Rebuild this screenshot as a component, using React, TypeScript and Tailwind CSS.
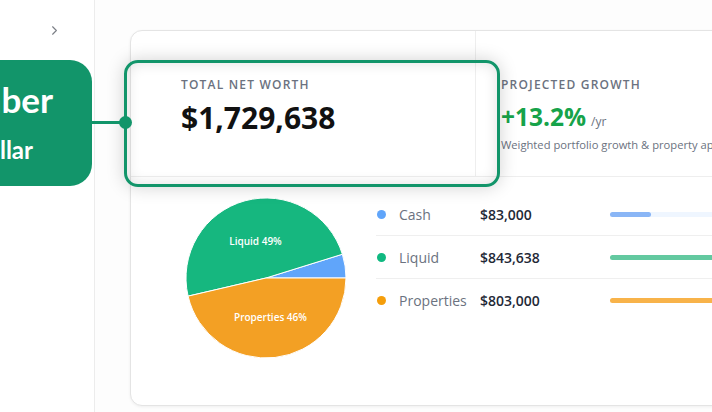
import React from "react";
import { ChevronRight } from "lucide-react";

const rows = [
  { label: "Cash", value: 83000, dot: "bg-[#60a5fa]", fill: "bg-[#8ab6f6]", track: "bg-[#eff6ff]" },
  { label: "Liquid", value: 843638, dot: "bg-[#10b981]", fill: "bg-[#63c9a0]", track: "bg-[#ecfdf5]" },
  { label: "Properties", value: 803000, dot: "bg-[#f59e0b]", fill: "bg-[#f8b34a]", track: "bg-[#fffbeb]" },
];

const max = Math.max(...rows.map((r) => r.value));
const fmt = (n: number) => "$" + n.toLocaleString("en-US");

function Pie() {
  return (
    <svg width="170" height="170" viewBox="0 0 170 170" className="shrink-0">
      <path d="M85,85 L165,85 A80,80 0 0 0 161.39,61.24 Z" fill="#60a5fa" stroke="#fff" strokeWidth="1" />
      <path d="M85,85 L161.39,61.24 A80,80 0 0 0 7.08,103.13 Z" fill="#16b77f" stroke="#fff" strokeWidth="1" />
      <path d="M85,85 L7.08,103.13 A80,80 0 0 0 165,85 Z" fill="#f3a024" stroke="#fff" strokeWidth="1" />
      <text x="74.5" y="51.5" textAnchor="middle" fill="#fff" fontSize="10" fontWeight="600" fontFamily="'Open Sans', sans-serif">
        Liquid 49%
      </text>
      <text x="89.5" y="127.5" textAnchor="middle" fill="#fff" fontSize="10" fontWeight="600" fontFamily="'Open Sans', sans-serif">
        Properties 46%
      </text>
    </svg>
  );
}

export default function App() {
  return (
    <div className="relative w-[712px] h-[412px] overflow-hidden bg-white flex font-['Open_Sans',sans-serif]">
      <aside className="w-[95px] h-full shrink-0 border-r border-[#ececec] flex justify-end pr-[32px] pt-[23px]">
        <ChevronRight size={15} strokeWidth={1.8} className="text-[#7b7f86]" />
      </aside>
      <main className="flex-1 min-w-0 pl-[35px] pt-[30px] bg-[#fdfdfd]">
        <div className="w-[640px] h-[376px] rounded-xl border border-[#e4e4e4] bg-white shadow-[0_1px_3px_rgba(0,0,0,0.06)]">
          <div className="flex h-[146px] border-b border-[#eeeeee]">
            <div className="w-[344px] shrink-0 pl-[50px] pt-[46px]">
              <div className="text-[12px] leading-[16px] tracking-[0.1em] font-semibold text-[#6b7280]">TOTAL NET WORTH</div>
              <div className="mt-[6px] text-[30px] leading-[38px] font-bold text-[#111111]">$1,729,638</div>
            </div>
            <div className="flex-1 min-w-0 overflow-hidden border-l border-[#eeeeee] pl-[25px] pt-[46px]">
              <div className="text-[12px] leading-[16px] tracking-[0.1em] font-semibold text-[#6b7280]">PROJECTED GROWTH</div>
              <div className="mt-[8px] flex items-baseline gap-[5px]">
                <span className="text-[24.5px] leading-[32px] font-bold text-[#16a34a]">+13.2%</span>
                <span className="text-[12px] text-[#6b7280]">/yr</span>
              </div>
              <div className="mt-[4px] text-[11.2px] leading-[16px] text-[#6b7280] whitespace-nowrap">
                Weighted portfolio growth &amp; property appreciation
              </div>
            </div>
          </div>
          <div className="flex pl-[50px] pt-[16px]">
            <Pie />
            <div className="ml-[25px] w-[420px]">
              {rows.map((r, i) => (
                <div
                  key={r.label}
                  className={`h-[43px] flex items-center ${i < rows.length - 1 ? "border-b border-[#efefef]" : ""}`}
                >
                  <span className={`ml-[1px] w-[9px] h-[9px] rounded-full shrink-0 ${r.dot}`} />
                  <span className="ml-[13px] w-[81px] shrink-0 text-[14px] text-[#6b7280]">{r.label}</span>
                  <span className="w-[130px] shrink-0 text-[14px] font-semibold text-[#1f2937]">{fmt(r.value)}</span>
                  <div className={`w-[418px] h-[5px] rounded-full shrink-0 ${r.track}`}>
                    <div className={`h-full rounded-full ${r.fill}`} style={{ width: `${(r.value / max) * 100}%` }} />
                  </div>
                </div>
              ))}
            </div>
          </div>
        </div>
      </main>

      {/* highlight overlay */}
      <div className="absolute left-[124px] top-[60px] w-[376px] h-[127px] rounded-[14px] border-[3px] border-[#12956a] shadow-[0_0_18px_rgba(0,0,0,0.18),inset_0_0_14px_rgba(0,0,0,0.12)]" />
      <div className="absolute left-[92px] top-[120.5px] w-[33px] h-[3px] bg-[#12956a]" />
      <div className="absolute left-[118.5px] top-[115.5px] w-[13px] h-[13px] rounded-full bg-[#12956a]" />
      <div className="absolute left-[-150px] top-[60px] w-[242px] h-[126px] rounded-[22px] bg-[#12956a] flex flex-col items-end font-['Lato',sans-serif] font-bold text-white whitespace-nowrap">
        <span className="mt-[21px] mr-[39px] text-[35px] leading-[36px]">Big number</span>
        <span className="mt-[19px] mr-[59px] text-[24px] leading-[28px]">Whole dollar</span>
      </div>
    </div>
  );
}
